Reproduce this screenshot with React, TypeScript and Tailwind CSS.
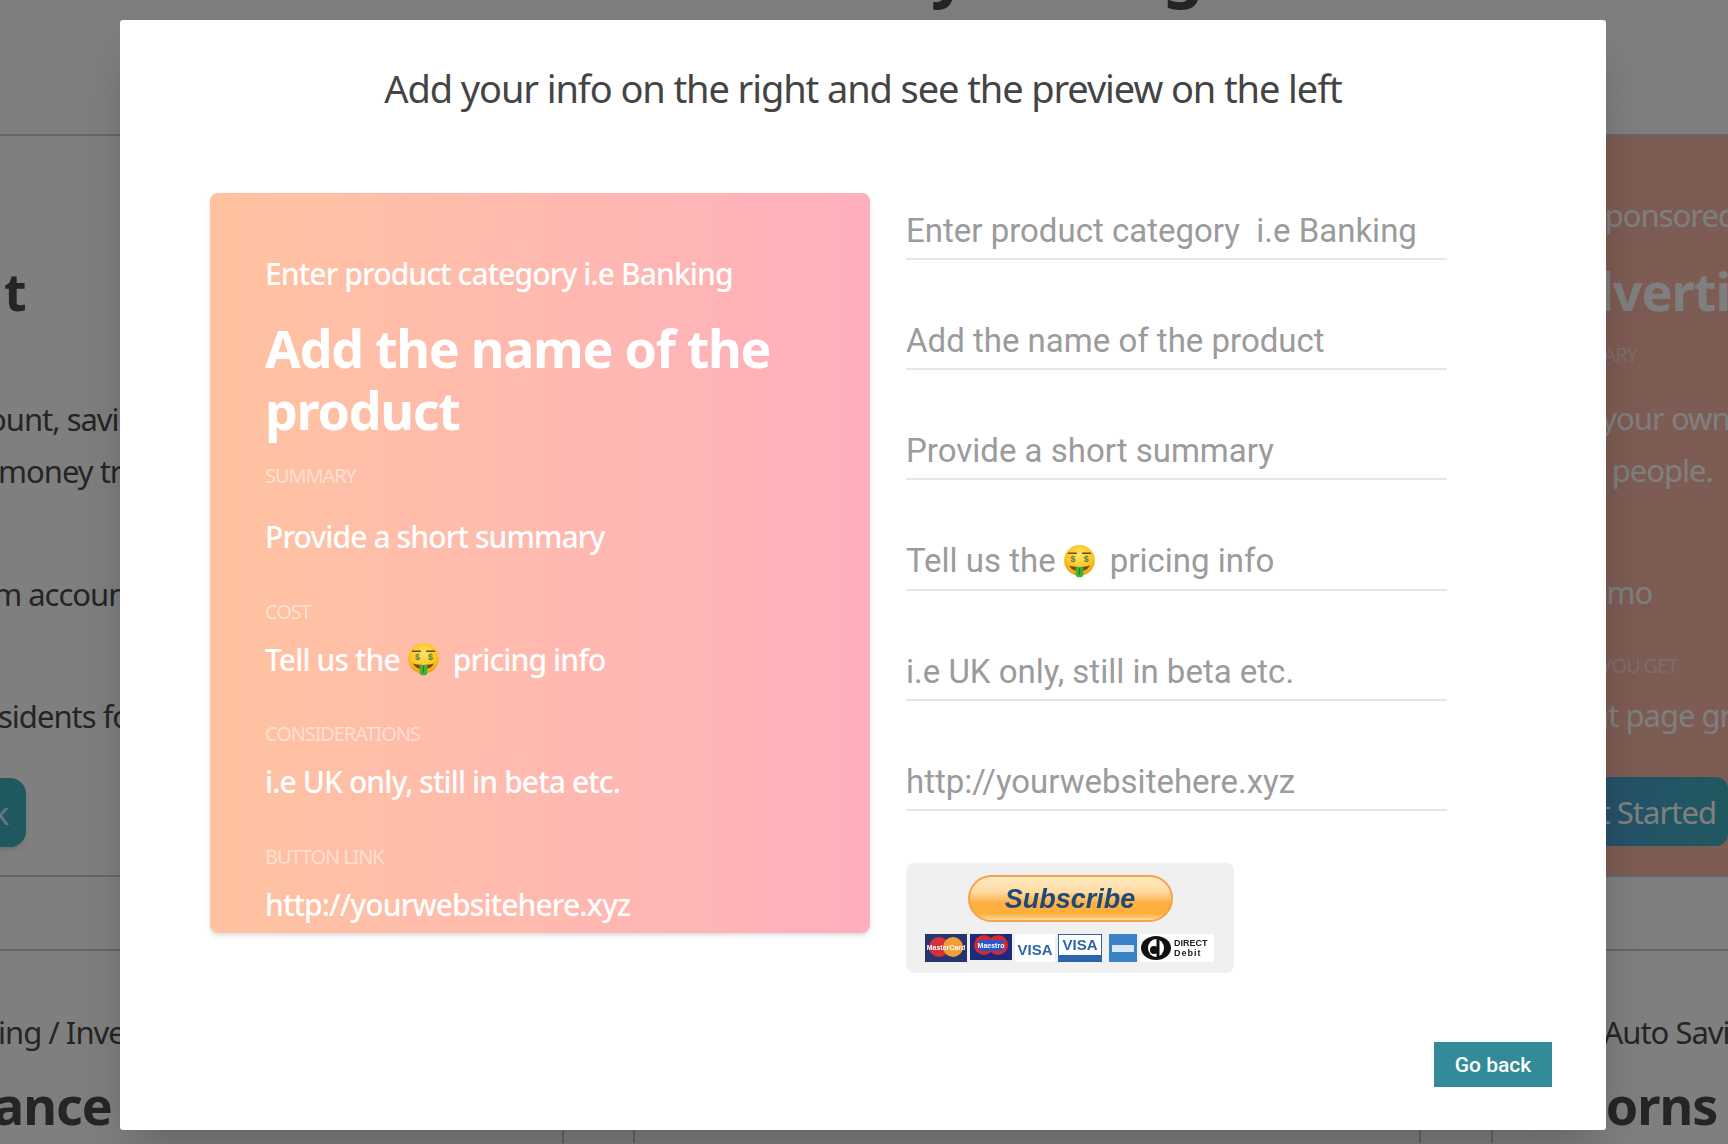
import React from "react";

const bodyFont = "font-['Noto_Sans',sans-serif]";

const Fields = [
  "Enter product category\u00a0\u00a0i.e Banking",
  "Add the name of the product",
  "Provide a short summary",
  "",
  "i.e UK only, still in beta etc.",
  "http://yourwebsitehere.xyz",
];

const MoneyFace = ({ size }: { size: number }) => (
  <svg width={size} height={size} viewBox="0 0 32 32" className="shrink-0">
    <defs>
      <radialGradient id="face" cx="50%" cy="35%" r="65%">
        <stop offset="0%" stopColor="#ffe36b" />
        <stop offset="70%" stopColor="#fcc21b" />
        <stop offset="100%" stopColor="#ec9a18" />
      </radialGradient>
    </defs>
    <ellipse cx="16" cy="15" rx="14" ry="14" fill="url(#face)" />
    <path d="M6 8.500h7M19 8.500h7" stroke="#6b4a1c" strokeWidth="1.500" strokeLinecap="round" />
    <text x="10" y="16" fontSize="8" fontWeight="700" fill="#4f7f3c" textAnchor="middle" fontFamily="Liberation Sans">$</text>
    <text x="22" y="16" fontSize="8" fontWeight="700" fill="#4f7f3c" textAnchor="middle" fontFamily="Liberation Sans">$</text>
    <path d="M6.500 19.500c3 2 16 2 19 0-1 3.500-5 5.500-9.500 5.500s-8.500-2-9.500-5.500z" fill="#7a4a1a" />
    <path d="M12.500 21h7v7c0 1.500-1.200 2.500-3.500 2.500s-3.500-1-3.500-2.500z" fill="#3fb23a" />
    <path d="M16 22v6" stroke="#1f7d22" strokeWidth="1" />
  </svg>
);

const PreviewRow = ({ label, first, children }: { label: string; first?: boolean; children: React.ReactNode }) => (
  <>
    <p className={`${first ? "mt-[23px]" : "mt-[42.500px]"} h-6 text-[20px] leading-6 tracking-[-1.100px] text-white/50 uppercase`}>{label}</p>
    <div className={`${first ? "mt-[29px]" : "mt-[16px]"} flex h-10 items-center text-[30px] font-medium leading-10 tracking-[-0.9px] text-white whitespace-nowrap`}>
      {children}
    </div>
  </>
);

const PaymentCards = () => (
  <svg width="290" height="28" viewBox="0 0 290 28" className="mt-[12px] blur-[0.6px]">
    <rect x="0" y="0" width="42" height="28" fill="#27346e" />
    <circle cx="14" cy="13" r="10" fill="#d8303a" />
    <circle cx="28" cy="13" r="10" fill="#efa03c" />
    <text x="21" y="16" fontSize="7" fontWeight="700" fill="#fff" textAnchor="middle" fontFamily="Liberation Sans">MasterCard</text>
    <rect x="45" y="0" width="42" height="26" fill="#1b2a7a" />
    <circle cx="59" cy="11" r="10" fill="#d42a30" />
    <circle cx="73" cy="11" r="10" fill="#d42a30" />
    <rect x="54" y="6" width="24" height="11" fill="#2a56c8" />
    <text x="66" y="14" fontSize="7" fontWeight="700" fill="#fff" textAnchor="middle" fontFamily="Liberation Sans">Maestro</text>
    <rect x="90" y="0" width="40" height="28" fill="#fff" />
    <text x="110" y="21" fontSize="15" fontWeight="700" fill="#2b66a8" textAnchor="middle" fontFamily="Liberation Sans">VISA</text>
    <rect x="133.500" y="0.500" width="43" height="27" fill="#fff" stroke="#2a66ae" />
    <text x="155" y="16" fontSize="15" fontWeight="700" fill="#2b66a8" textAnchor="middle" fontFamily="Liberation Sans">VISA</text>
    <rect x="134" y="21" width="43" height="7" fill="#2a66ae" />
    <rect x="184" y="0" width="28" height="28" fill="#3a82c8" />
    <rect x="187" y="11" width="22" height="7" fill="#d5e6f5" />
    <rect x="215" y="0" width="74" height="28" fill="#fff" />
    <ellipse cx="231" cy="14" rx="15" ry="12" fill="#111" />
    <ellipse cx="231" cy="14" rx="8" ry="9" fill="#fff" />
    <circle cx="229" cy="16" r="4" fill="#111" />
    <path d="M233 3v22" stroke="#111" strokeWidth="3" />
    <text x="249" y="12" fontSize="9" fontWeight="700" fill="#222" fontFamily="Liberation Sans">DIRECT</text>
    <text x="249" y="22" fontSize="9" fontWeight="700" fill="#222" fontFamily="Liberation Sans" letterSpacing="1">Debit</text>
  </svg>
);

const Background = () => (
  <div className={`${bodyFont} text-[#4a4a4a]`}>
    <div className="h-[136px] overflow-hidden border-b-2 border-[#ccc]">
      <p className="-mt-[70px] pl-[752px] text-[64px] leading-[80px] font-bold whitespace-nowrap">Money Management</p>
    </div>

    <div className="flex h-[741px] border-b-2 border-[#ccc]">
      <div className="w-[1491px] shrink-0 text-[31px] leading-[52px] tracking-[-1px] whitespace-nowrap">
        <p className="ml-[4px] mt-[124px] h-[62px] text-[52px] leading-[62px] font-bold">t</p>
        <p className="-ml-[12px] mt-[71px]">ount, savings</p>
        <p className="-ml-[2px]">money transfers</p>
        <p className="-ml-[25px] mt-[71px]">um account</p>
        <p className="-ml-[2px] mt-[70px]">sidents for</p>
        <div className="-ml-[100px] mt-[36px] flex h-[69px] w-[126px] items-center justify-end rounded-2xl bg-[#3fb0bd] pr-[18px] text-white/80 shadow-md">k</div>
      </div>
      <div className="min-w-0 flex-1 bg-[#fbb9a6] pl-[55px] text-[31px] leading-[52px] tracking-[-1px] whitespace-nowrap text-white">
        <p className="mt-[53px]">Be Sponsored</p>
        <p className="mt-[19px] h-[62px] text-[52px] leading-[62px] font-bold">Advertising</p>
        <p className="mt-[21px] h-6 text-[20px] leading-6 tracking-[-1.100px] text-white/50">SUMMARY</p>
        <p className="mt-[25px]">Get your own</p>
        <p>best people.</p>
        <p className="mt-[70px]">A demo</p>
        <p className="mt-[36px] h-6 text-[20px] leading-6 tracking-[-1.100px] text-white/50">WHAT YOU GET</p>
        <p className="mt-[11px]">Front page group</p>
        <div className="mt-[36px] flex h-[69px] items-center justify-end rounded-l-2xl rounded-r-xl bg-gradient-to-r from-[#4f9ce0] to-[#3fb0bd] pr-[12px]">Get Started</div>
      </div>
    </div>

    <div className="h-[74px] border-b-2 border-[#ccc]" />

    <div className="grid h-[192px] grid-cols-[562px_73px_784px_74px_1fr] text-[31px] leading-[52px] tracking-[-1px] whitespace-nowrap">
      <div>
        <p className="-ml-[2px] mt-[55px]">ing / Investing</p>
        <p className="-ml-[7px] mt-[16px] text-[52px] leading-[62px] font-bold">ance</p>
      </div>
      <div className="border-x-2 border-[#ccc]" />
      <div />
      <div className="border-x-2 border-[#ccc]" />
      <div className="pl-[52px]">
        <p className="mt-[55px]">Fun Auto Saving</p>
        <p className="mt-[16px] text-[52px] leading-[62px] font-bold">Acorns</p>
      </div>
    </div>
  </div>
);

export default function App() {
  return (
    <div className="relative h-[1144px] w-[1728px] overflow-hidden bg-white">
      <Background />
      <div className="absolute inset-0 bg-black/50" />

      <div className={`${bodyFont} absolute left-[120px] top-[20px] h-[1110px] w-[1486px] rounded-[3px] bg-white shadow-2xl`}>
        <h2 className="pt-[44px] text-center text-[38px] leading-[48px] tracking-[-1.100px] text-[#444]">
          Add your info on the right and see the preview on the left
        </h2>

        <div className="mt-[81px] flex gap-9 pl-[90px]">
          <div className="h-[740px] w-[660px] overflow-hidden rounded-lg bg-gradient-to-r from-[#ffc3a0] to-[#ffafbd] pl-[55px] pt-[61px] shadow-md">
            <p className="h-10 text-[30px] font-medium leading-10 tracking-[-0.9px] text-white whitespace-nowrap">Enter product category i.e Banking</p>
            <h3 className="mt-[23px] w-[540px] text-[52px] leading-[62px] font-bold tracking-[-1.300px] text-white">Add the name of the product</h3>
            <PreviewRow label="Summary" first>Provide a short summary</PreviewRow>
            <PreviewRow label="Cost">
              Tell us the <span className="ml-[6px] mr-[12px]"><MoneyFace size={35} /></span> pricing info
            </PreviewRow>
            <PreviewRow label="Considerations">i.e UK only, still in beta etc.</PreviewRow>
            <PreviewRow label="Button link">http://yourwebsitehere.xyz</PreviewRow>
          </div>

          <div className="w-[541px] font-['Roboto',sans-serif]">
            {Fields.map((field, i) => (
              <div key={i} className={`flex h-[67px] items-center border-b-2 border-[#e6e6e6] pt-[10px] text-[33px] whitespace-nowrap text-[#9b9b9b] ${i === 0 ? "" : "mt-[43.200px]"}`}>
                {field || (
                  <>
                    Tell us the <span className="ml-[6px] mr-[13px]"><MoneyFace size={35} /></span> pricing info
                  </>
                )}
              </div>
            ))}

            <div className="mt-[52px] flex h-[110px] w-[328px] flex-col items-center rounded-lg bg-[#f0f0f0] pt-3">
              <div className="flex h-[47px] w-[205px] items-center justify-center rounded-full border-2 border-[#f8a04a] bg-[linear-gradient(to_bottom,#ffe9c4_0%,#ffdca0_35%,#fdb045_60%,#fdae3b_85%,#ffd9a0_100%)] pt-[2px] font-['Liberation_Sans',sans-serif] text-[27px] font-bold italic text-[#1f4a78] blur-[0.5px]">
                Subscribe
              </div>
              <PaymentCards />
            </div>
          </div>
        </div>

        <div className="absolute bottom-[43px] right-[54px] flex h-[45px] w-[118px] items-center justify-center bg-[#338a98] pt-[2px] font-['Roboto',sans-serif] text-[21px] font-medium text-white">
          Go back
        </div>
      </div>
    </div>
  );
}
